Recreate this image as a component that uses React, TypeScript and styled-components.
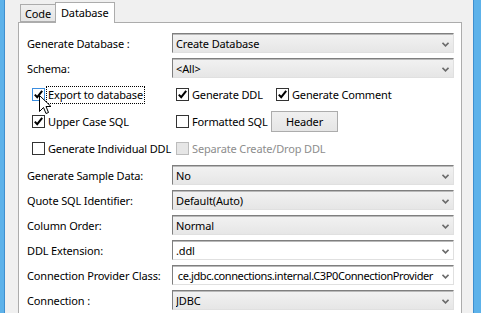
import styled, { createGlobalStyle } from "styled-components";

const GlobalStyle = createGlobalStyle`
  html, body {
    margin: 0;
    padding: 0;
    background: #f0f0f0;
    overflow: hidden;
  }
  body {
    font-family: "Noto Sans", "Open Sans", "Liberation Sans", sans-serif;
    font-size: 11px;
    letter-spacing: -0.15px;
    color: #000;
  }
`;

const Screen = styled.div`
  position: relative;
  display: flex;
  width: 481px;
  height: 313px;
  overflow: hidden;
`;

const SideStrip = styled.div<{ $w: number; $side: "left" | "right" }>`
  width: ${(p) => p.$w}px;
  flex: none;
  background: #5db2ea;
  ${(p) =>
    p.$side === "left"
      ? "border-right: 1px solid #3f8fcf;"
      : "border-left: 1px solid #3f8fcf;"}
`;

const Main = styled.div`
  flex: 1;
  display: flex;
  flex-direction: column;
  padding: 2px 11px 0 13px;
`;

const TabBar = styled.div`
  display: flex;
  align-items: flex-end;
  height: 20px;
  padding-left: 2px;
  position: relative;
  z-index: 1;
`;

const Tab = styled.div<{ $active?: boolean }>`
  box-sizing: border-box;
  display: flex;
  align-items: center;
  height: ${(p) => (p.$active ? 21 : 18)}px;
  margin-bottom: ${(p) => (p.$active ? -1 : 0)}px;
  margin-left: ${(p) => (p.$active ? -1 : 0)}px;
  padding: 0 ${(p) => (p.$active ? 5 : 4)}px ${(p) => (p.$active ? 2 : 0)}px;
  border: 1px solid #acacac;
  border-bottom: ${(p) => (p.$active ? "none" : "1px solid #acacac")};
  background: ${(p) => (p.$active ? "#fff" : "linear-gradient(#f0f0f0, #e5e5e5)")};
`;

const Panel = styled.div`
  flex: 1;
  background: #fff;
  border: 1px solid #acacac;
  border-bottom: none;
  padding: 10px 7px 0 8px;
`;

const FieldGrid = styled.div<{ $top?: number }>`
  display: grid;
  grid-template-columns: 145px 1fr;
  grid-auto-rows: 20px;
  row-gap: 5px;
  margin-top: ${(p) => p.$top ?? 0}px;
`;

const Label = styled.div`
  display: flex;
  align-items: center;
  white-space: nowrap;
`;

const Combo = styled.div<{ $editable?: boolean }>`
  box-sizing: border-box;
  display: flex;
  align-items: center;
  height: 20px;
  min-width: 0;
  border: 1px solid;
  border-color: #7f7f7f #e0e0e0 #e0e0e0 #7f7f7f;
  box-shadow: inset 0 1px 0 #b9b9b9;
  background: ${(p) => (p.$editable ? "#fff" : "linear-gradient(#f2f2f2, #e6e6e6)")};
  padding: 1px 0 0 3px;
`;

const ComboText = styled.div<{ $clipStart?: boolean }>`
  flex: 1;
  min-width: 0;
  overflow: hidden;
  white-space: nowrap;
  display: flex;
  justify-content: ${(p) => (p.$clipStart ? "flex-end" : "flex-start")};
  padding-right: ${(p) => (p.$clipStart ? 5 : 0)}px;
  span {
    flex: none;
    letter-spacing: ${(p) => (p.$clipStart ? "-0.4px" : "inherit")};
  }
`;

const Chevron = styled.svg`
  flex: none;
  width: 7px;
  height: 5px;
  margin: 1px 4px 0 4px;
`;

const CheckGrid = styled.div`
  display: grid;
  grid-template-columns: 144px 100px auto;
  grid-auto-rows: 21px;
  row-gap: 6px;
  margin: 6px 0 0 1px;
`;

const CheckItem = styled.div<{ $disabled?: boolean; $bare?: boolean; $span?: boolean }>`
  display: flex;
  align-items: center;
  padding-left: ${(p) => (p.$bare ? 0 : 4)}px;
  white-space: nowrap;
  color: ${(p) => (p.$disabled ? "#8d8d8d" : "#000")};
  grid-column: ${(p) => (p.$span ? "2 / 4" : "auto")};
`;

const Box = styled.div<{ $state?: "hover" | "disabled" }>`
  box-sizing: border-box;
  width: 13px;
  height: 13px;
  flex: none;
  display: flex;
  align-items: center;
  justify-content: center;
  border: 1px solid
    ${(p) =>
      p.$state === "hover" ? "#3c8ee0" : p.$state === "disabled" ? "#bcbcbc" : "#333"};
  background: ${(p) => (p.$state === "disabled" ? "#e6e6e6" : "#fff")};
`;

const CheckText = styled.span<{ $focus?: boolean }>`
  margin-left: 2px;
  padding: 0 1px 1px;
  outline: ${(p) => (p.$focus ? "1px dotted #000" : "none")};
`;

const Button = styled.div`
  box-sizing: border-box;
  width: 67px;
  height: 21px;
  margin-left: -1px;
  display: flex;
  align-items: center;
  justify-content: center;
  border: 1px solid #acacac;
  background: linear-gradient(#f0f0f0, #e5e5e5);
`;

const Cursor = styled.svg`
  position: absolute;
  left: 39px;
  top: 95px;
  width: 13px;
  height: 21px;
`;

const ChevronIcon = () => (
  <Chevron viewBox="0 0 7 5">
    <path d="M0.5 0.8 L3.5 3.8 L6.5 0.8" fill="none" stroke="#6b6b6b" strokeWidth="1.6" />
  </Chevron>
);

const Check = () => (
  <svg width="11" height="11" viewBox="0 0 11 11">
    <path d="M1.8 5.6 L4.2 8.2 L9.2 1.8" fill="none" stroke="#000" strokeWidth="2" />
  </svg>
);

type Field = { label: string; value: string; editable?: boolean; clipStart?: boolean };

const topFields: Field[] = [
  { label: "Generate Database :", value: "Create Database" },
  { label: "Schema:", value: "<All>" },
];

const bottomFields: Field[] = [
  { label: "Generate Sample Data:", value: "No" },
  { label: "Quote SQL Identifier:", value: "Default(Auto)" },
  { label: "Column Order:", value: "Normal" },
  { label: "DDL Extension:", value: ".ddl", editable: true },
  {
    label: "Connection Provider Class:",
    value: "ce.jdbc.connections.internal.C3P0ConnectionProvider",
    editable: true,
    clipStart: true,
  },
  { label: "Connection :", value: "JDBC" },
];

const Fields = ({ items, top }: { items: Field[]; top?: number }) => (
  <FieldGrid $top={top}>
    {items.map((f) => [
      <Label key={f.label + "-l"}>{f.label}</Label>,
      <Combo key={f.label + "-c"} $editable={f.editable}>
        <ComboText $clipStart={f.clipStart}>
          <span>{f.value}</span>
        </ComboText>
        <ChevronIcon />
      </Combo>,
    ])}
  </FieldGrid>
);

const App: React.FC = () => {
  return (
    <>
      <GlobalStyle />
      <Screen>
        <SideStrip $w={4} $side="left" />
        <Main>
          <TabBar>
            <Tab>Code</Tab>
            <Tab $active>Database</Tab>
          </TabBar>
          <Panel>
            <Fields items={topFields} />
            <CheckGrid>
              <CheckItem>
                <Box $state="hover">
                  <Check />
                </Box>
                <CheckText $focus>Export to database</CheckText>
              </CheckItem>
              <CheckItem>
                <Box>
                  <Check />
                </Box>
                <CheckText>Generate DDL</CheckText>
              </CheckItem>
              <CheckItem>
                <Box>
                  <Check />
                </Box>
                <CheckText>Generate Comment</CheckText>
              </CheckItem>

              <CheckItem>
                <Box>
                  <Check />
                </Box>
                <CheckText>Upper Case SQL</CheckText>
              </CheckItem>
              <CheckItem>
                <Box />
                <CheckText>Formatted SQL</CheckText>
              </CheckItem>
              <CheckItem $bare>
                <Button>Header</Button>
              </CheckItem>

              <CheckItem>
                <Box />
                <CheckText>Generate Individual DDL</CheckText>
              </CheckItem>
              <CheckItem $disabled $span>
                <Box $state="disabled" />
                <CheckText>Separate Create/Drop DDL</CheckText>
              </CheckItem>
            </CheckGrid>
            <Fields items={bottomFields} top={6} />
          </Panel>
        </Main>
        <SideStrip $w={7} $side="right" />
        <Cursor viewBox="0 0 13 21">
          <path
            d="M0.5 0.5 L0.5 16.5 L4.5 12.5 L7 18.5 L9.5 17.5 L7 11.5 L12 11.5 Z"
            fill="#fff"
            stroke="#000"
            strokeWidth="1"
            strokeLinejoin="round"
          />
        </Cursor>
      </Screen>
    </>
  );
};

export default App;
